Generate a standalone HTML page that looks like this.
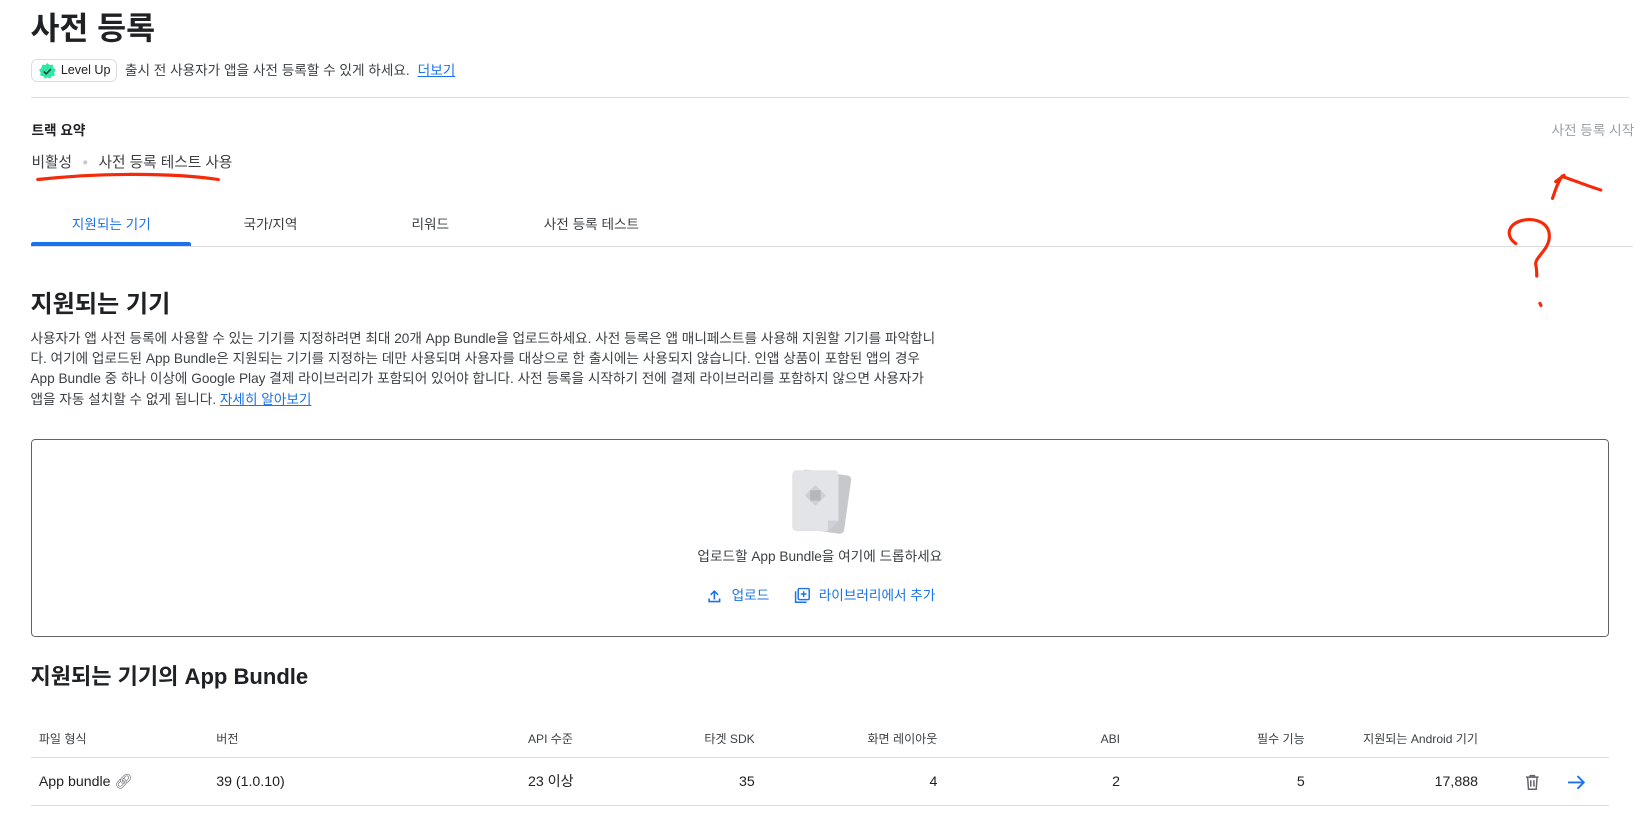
<!DOCTYPE html>
<html><head><meta charset="utf-8">
<style>
*{margin:0;padding:0;box-sizing:border-box}
body{width:1646px;height:824px;background:#fff;font-family:"Liberation Sans","Noto Sans CJK KR",sans-serif;color:#202124;position:relative;overflow:hidden}
#w{position:absolute;left:0;top:0;width:1568px;height:785px;zoom:1.0497}
.a{position:absolute;white-space:nowrap;line-height:1.25}
.blue{color:#1a73e8}
</style></head><body><div id="w">
<div class="a" style="left:29px;top:9px;font-size:30px;font-weight:bold">사전 등록</div>
<div class="a" style="left:30px;top:56px;width:81px;height:22px;border:1px solid #dadce0;border-radius:6px;font-size:12px;padding:3px 0 0 27px;color:#202124">Level Up</div>
<svg class="a" style="left:36px;top:59px" width="18" height="18" viewBox="0 0 18 18"><polygon points="9,1 11,3 14,2.5 14.5,5.5 17,7.5 15.5,10 16,13 13,13.5 11.5,16 9,14.5 6.5,16 5,13.5 2,13 2.5,10 1,7.5 3.5,5.5 4,2.5 7,3" fill="#2ee8a5"/><path d="M5.5 9l2.3 2.3 4.5-4.5" stroke="#0d3b2a" stroke-width="1.4" fill="none"/></svg>
<div class="a" style="left:119px;top:59px;font-size:13px;color:#3c4043">출시 전 사용자가 앱을 사전 등록할 수 있게 하세요. <span class="blue" style="text-decoration:underline;margin-left:4px">더보기</span></div>
<div class="a" style="left:30px;top:92px;width:1522px;height:1px;background:#dadce0"></div>
<div class="a" style="left:30px;top:116px;font-size:13px;font-weight:bold">트랙 요약</div>
<div class="a" style="left:1478px;top:116px;font-size:13px;color:#9aa0a6">사전 등록 시작</div>
<div class="a" style="left:30px;top:147px;font-size:14px;color:#3c4043">비활성 <span style="color:#c8c8c8;font-size:9px;margin:0 6px;vertical-align:2px">●</span> 사전 등록 테스트 사용</div>
<div class="a" style="left:30px;top:206px;width:152px;text-align:center;font-size:13px;color:#1a73e8">지원되는 기기</div>
<div class="a" style="left:30px;top:231px;width:152px;height:3px;background:#1a73e8;border-radius:2px 2px 0 0"></div>
<div class="a" style="left:232px;top:206px;font-size:13px;color:#3c4043">국가/지역</div>
<div class="a" style="left:392px;top:206px;font-size:13px;color:#3c4043">리워드</div>
<div class="a" style="left:518px;top:206px;font-size:13px;color:#3c4043">사전 등록 테스트</div>
<div class="a" style="left:30px;top:234px;width:1526px;height:1px;background:#dadce0"></div>
<div class="a" style="left:29px;top:276px;font-size:23px;font-weight:bold">지원되는 기기</div>
<div class="a" style="left:29px;top:313px;width:862px;white-space:normal;font-size:13px;line-height:19.5px;color:#3c4043">사용자가 앱 사전 등록에 사용할 수 있는 기기를 지정하려면 최대 20개 App Bundle을 업로드하세요. 사전 등록은 앱 매니페스트를 사용해 지원할 기기를 파악합니다. 여기에 업로드된 App Bundle은 지원되는 기기를 지정하는 데만 사용되며 사용자를 대상으로 한 출시에는 사용되지 않습니다. 인앱 상품이 포함된 앱의 경우 App Bundle 중 하나 이상에 Google Play 결제 라이브러리가 포함되어 있어야 합니다. 사전 등록을 시작하기 전에 결제 라이브러리를 포함하지 않으면 사용자가 앱을 자동 설치할 수 없게 됩니다. <span class="blue" style="text-decoration:underline">자세히 알아보기</span></div>
<div class="a" style="left:30px;top:418px;width:1503px;height:189px;border:1px solid #5f6368;border-radius:4px"></div>
<svg class="a" style="left:750px;top:444px" width="62" height="66" viewBox="0 0 62 66"><rect x="10" y="6" width="48" height="56" rx="4" fill="#c6c8cc" transform="rotate(8 34 34)"/><path d="M9 4h36a4 4 0 0 1 4 4v44l-10 10H9a4 4 0 0 1-4-4V8a4 4 0 0 1 4-4z" fill="#e3e4e7"/><path d="M49 52l-10 10V52z" fill="#cfd0d4"/><polygon points="27,18 37,28 27,38 17,28" fill="#cfd0d4"/><rect x="22" y="23" width="10" height="10" fill="#b4b6bb"/></svg>
<div class="a" style="left:0;width:1562px;top:522px;text-align:center;font-size:13px;color:#3c4043">업로드할 App Bundle을 여기에 드롭하세요</div>
<svg class="a" style="left:674px;top:561px" width="14" height="14" viewBox="0 0 14 14"><path d="M7 10V2M3.5 5.5L7 2l3.5 3.5M2 9v3h10V9" stroke="#1a73e8" stroke-width="1.5" fill="none"/></svg>
<div class="a blue" style="left:697px;top:559px;font-size:13px">업로드</div>
<svg class="a" style="left:756px;top:559px" width="16" height="16" viewBox="0 0 16 16"><rect x="4" y="1.5" width="10.5" height="10.5" rx="1" stroke="#1a73e8" stroke-width="1.4" fill="none"/><path d="M1.5 4v10.5H12M9.2 4v5.5M6.5 6.7h5.5" stroke="#1a73e8" stroke-width="1.4" fill="none"/></svg>
<div class="a blue" style="left:780px;top:559px;font-size:13px">라이브러리에서 추가</div>
<div class="a" style="left:29px;top:632px;font-size:21px;font-weight:bold">지원되는 기기의 App Bundle</div>
<div style="font-size:11.5px;color:#3c4043">
<div class="a" style="left:37px;top:697px">파일 형식</div>
<div class="a" style="left:206px;top:697px">버전</div>
<div class="a" style="left:503px;top:697px">API 수준</div>
<div class="a" style="left:619px;top:697px;width:100px;text-align:right">타겟 SDK</div>
<div class="a" style="left:793px;top:697px;width:100px;text-align:right">화면 레이아웃</div>
<div class="a" style="left:967px;top:697px;width:100px;text-align:right">ABI</div>
<div class="a" style="left:1143px;top:697px;width:100px;text-align:right">필수 기능</div>
<div class="a" style="left:1258px;top:697px;width:150px;text-align:right">지원되는 Android 기기</div>
</div>
<div class="a" style="left:30px;top:721px;width:1503px;height:1px;background:#dadce0"></div>
<div style="font-size:13.5px;color:#202124">
<div class="a" style="left:37px;top:737px">App bundle <span style="color:#5f6368">🔗︎</span></div>
<div class="a" style="left:206px;top:737px">39 (1.0.10)</div>
<div class="a" style="left:503px;top:737px">23 이상</div>
<div class="a" style="left:619px;top:737px;width:100px;text-align:right">35</div>
<div class="a" style="left:793px;top:737px;width:100px;text-align:right">4</div>
<div class="a" style="left:967px;top:737px;width:100px;text-align:right">2</div>
<div class="a" style="left:1143px;top:737px;width:100px;text-align:right">5</div>
<div class="a" style="left:1308px;top:737px;width:100px;text-align:right">17,888</div>
</div>
<svg class="a" style="left:1453px;top:737px" width="14" height="16" viewBox="0 0 14 16"><path d="M1 3h12M5 3V1.5h4V3M2.5 3l.8 11.5h7.4L11.5 3M5.5 6v6M8.5 6v6" stroke="#5f6368" stroke-width="1.4" fill="none"/></svg>
<svg class="a" style="left:1493px;top:737px" width="18" height="16" viewBox="0 0 18 16"><path d="M1 8h15M10 2l6 6-6 6" stroke="#1a73e8" stroke-width="1.8" fill="none"/></svg>
<div class="a" style="left:30px;top:767px;width:1503px;height:1px;background:#dadce0"></div>
<svg class="a" style="left:0;top:0" width="1568" height="785"><g stroke="#f52a0a" stroke-width="3" fill="none" stroke-linecap="round">
<path d="M36 171C90 165 160 164 208 171"/>
<path d="M1479 189C1482 180 1484 174 1488 168C1500 172 1512 177 1525 181M1482 173L1490 167"/>
<path d="M1444 232C1434 225 1436 214 1450 210C1464 207 1476 213 1476 225C1476 238 1462 245 1463 252C1464 256 1464 260 1464 263"/>
<path d="M1467 289L1468 291"/></g></svg>
</div></body></html>
